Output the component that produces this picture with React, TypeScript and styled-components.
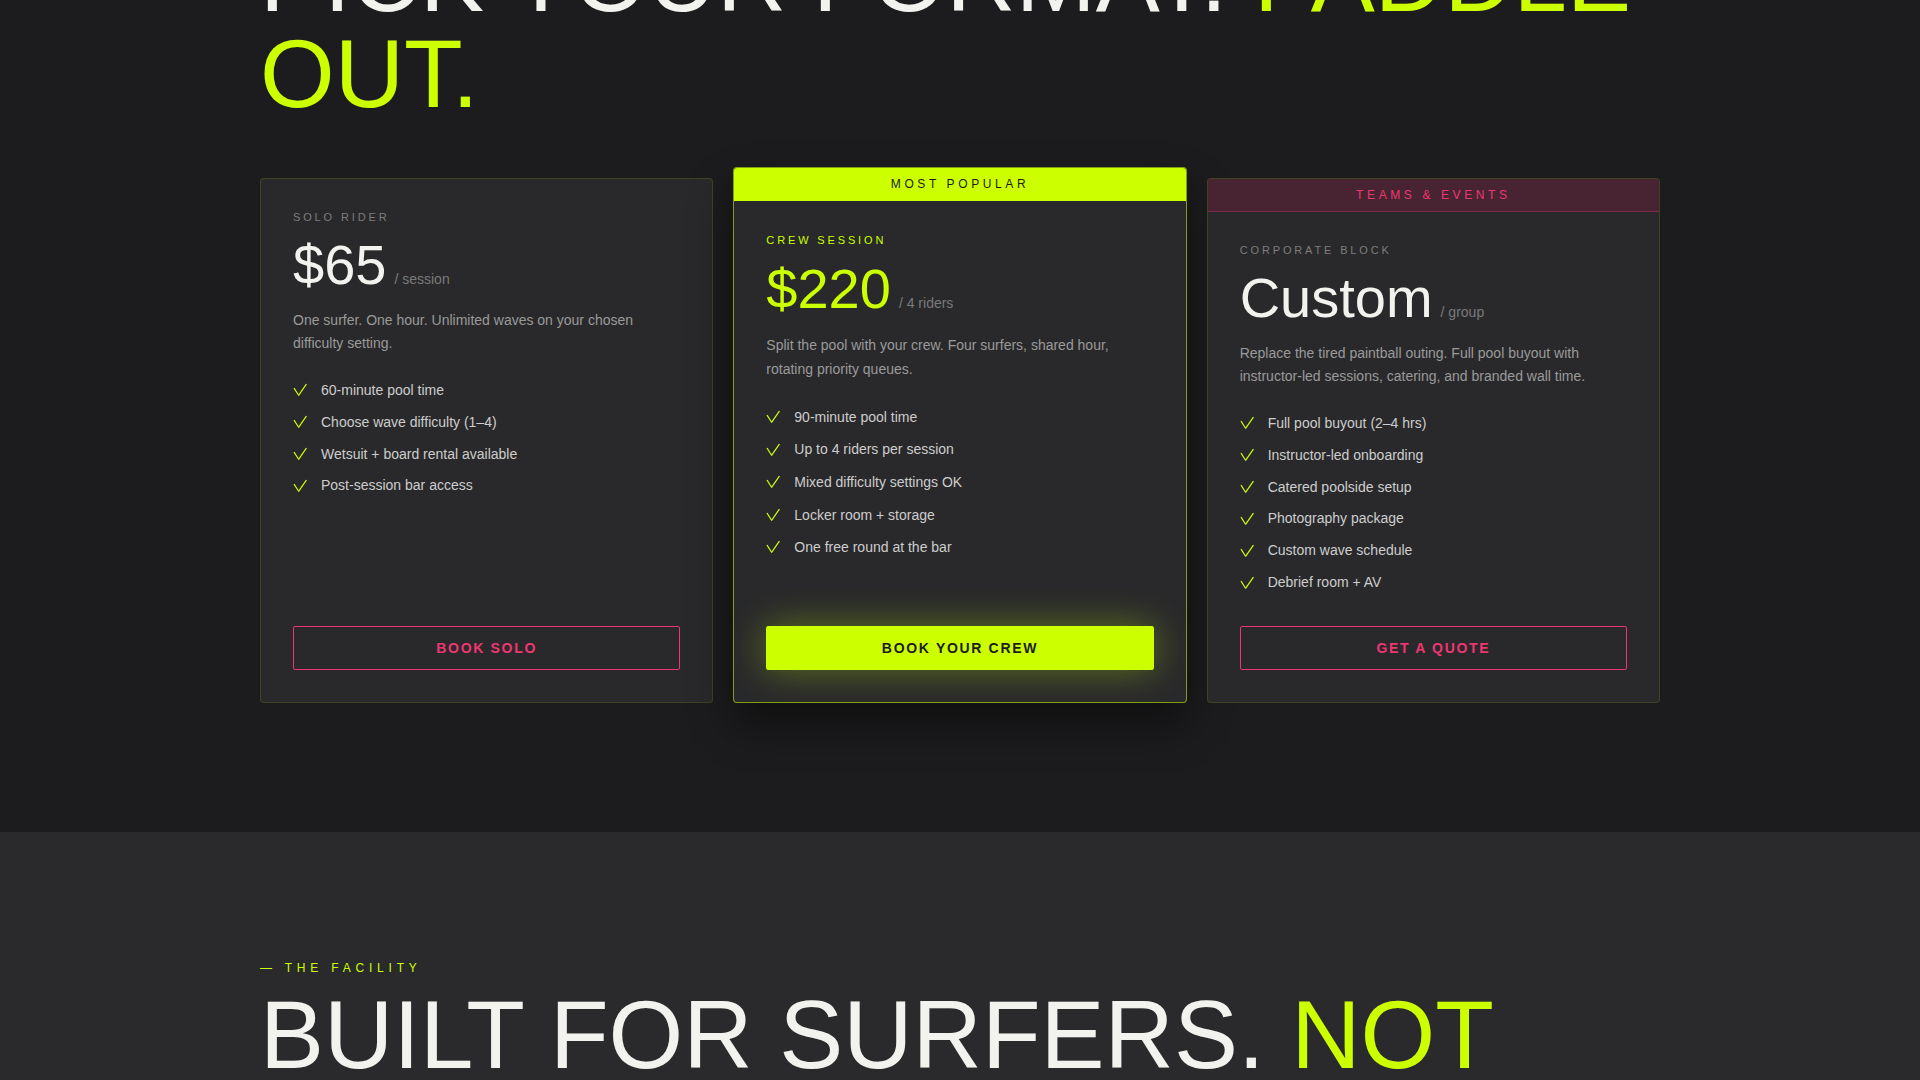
import React from "react";
import styled, { createGlobalStyle, css } from "styled-components";

const LIME = "#ccff00";
const PINK = "#ee3672";

const GlobalStyle = createGlobalStyle`
  *, *::before, *::after { box-sizing: border-box; }
  html, body { margin: 0; padding: 0; background: #1c1c1e; }
  body {
    font-family: "Liberation Sans", Arial, Helvetica, sans-serif;
    color: #f2f2ee;
    -webkit-font-smoothing: antialiased;
  }
`;

const Page = styled.div`
  height: 100vh;
  overflow: hidden;
`;

const PricingSection = styled.section`
  background: #1c1c1e;
  padding: 0 0 129px;
`;

const FacilitySection = styled.section`
  background: #2a2a2d;
  padding: 129px 0 128px;
`;

const Container = styled.div`
  width: 1400px;
  margin: 0 auto;
`;

const Heading = styled.h2`
  margin: 0;
  font-size: 96px;
  line-height: 1;
  font-weight: 400;
  text-transform: uppercase;
  color: #f2f2ee;
`;

const PricingHeading = styled(Heading)`
  margin: -70px 0 56px;
`;

const Accent = styled.span`
  color: ${LIME};
`;

const Eyebrow = styled.div`
  font-size: 12px;
  line-height: 1.2;
  letter-spacing: 0.4em;
  text-transform: uppercase;
  color: ${LIME};
  margin-bottom: 12px;
`;

const PlanGrid = styled.div`
  display: grid;
  grid-template-columns: repeat(3, 1fr);
  gap: 20px;
  align-items: stretch;
`;

const Card = styled.article<{ $featured?: boolean }>`
  display: flex;
  flex-direction: column;
  background: #29292b;
  border: 1px solid rgba(204, 255, 0, 0.13);
  border-radius: 4px;
  overflow: hidden;
  ${(p) =>
    p.$featured &&
    css`
      margin-top: -11px;
      border-color: rgba(204, 255, 0, 0.55);
      box-shadow: 0 22px 44px rgba(0, 0, 0, 0.45);
    `}
`;

const Band = styled.div<{ $tone: "lime" | "pink" }>`
  padding: 9px 0;
  font-size: 12px;
  line-height: 15px;
  letter-spacing: 0.3em;
  text-align: center;
  text-transform: uppercase;
  ${(p) =>
    p.$tone === "lime"
      ? css`
          background: ${LIME};
          color: #1c1c1e;
        `
      : css`
          background: #482433;
          color: ${PINK};
          padding-bottom: 8px;
          border-bottom: 1px solid #7c2b4a;
        `}
`;

const CardBody = styled.div<{ $featured?: boolean }>`
  flex: 1;
  display: flex;
  flex-direction: column;
  padding: ${(p) => (p.$featured ? "33px 32px 32px" : "32px")};
`;

const Tier = styled.div<{ $accent?: boolean }>`
  font-size: 11px;
  line-height: 1.2;
  letter-spacing: 0.26em;
  text-transform: uppercase;
  color: ${(p) => (p.$accent ? LIME : "#7d7d7d")};
  margin-bottom: ${(p) => (p.$accent ? "14px" : "13px")};
`;

const PriceRow = styled.div`
  display: flex;
  align-items: baseline;
  gap: 8px;
`;

const Price = styled.span<{ $accent?: boolean }>`
  font-size: 56px;
  line-height: 1;
  color: ${(p) => (p.$accent ? LIME : "#f2f2ee")};
`;

const PriceUnit = styled.span`
  font-size: 14px;
  color: #7a7a7a;
`;

const Description = styled.p<{ $loose?: boolean }>`
  margin: ${(p) => (p.$loose ? "17px 0 0" : "16px 0 0")};
  font-size: 14px;
  line-height: ${(p) => (p.$loose ? 1.7 : 1.62)};
  color: #9a9a9a;
`;

const Features = styled.ul<{ $loose?: boolean }>`
  list-style: none;
  margin: 24px 0 32px;
  padding: 0;
  display: flex;
  flex-direction: column;
  gap: ${(p) => (p.$loose ? "10.2px" : "9.6px")};
`;

const Feature = styled.li`
  display: flex;
  align-items: center;
  gap: 14px;
  font-size: 14px;
  line-height: 1.6;
  color: #cdcdcd;
`;

const CheckSvg = styled.svg`
  flex: none;
  width: 14px;
  height: 14px;
`;

const Button = styled.button<{ $variant: "solid" | "outline" }>`
  margin-top: auto;
  width: 100%;
  height: 44px;
  border-radius: 2px;
  font-family: inherit;
  font-size: 14px;
  font-weight: 700;
  letter-spacing: 0.12em;
  text-transform: uppercase;
  cursor: pointer;
  ${(p) =>
    p.$variant === "solid"
      ? css`
          background: ${LIME};
          color: #1c1c1e;
          border: 1px solid ${LIME};
          box-shadow: 0 0 36px rgba(204, 255, 0, 0.35);
        `
      : css`
          background: transparent;
          color: ${PINK};
          border: 1px solid ${PINK};
        `}
`;

const Check = () => (
  <CheckSvg viewBox="0 0 14 14" aria-hidden="true">
    <path
      d="M1.2 5.4 L5.6 12.3 L13.2 1.4"
      fill="none"
      stroke={LIME}
      strokeWidth="1.2"
      strokeLinecap="round"
      strokeLinejoin="round"
    />
  </CheckSvg>
);

type Plan = {
  band?: { text: string; tone: "lime" | "pink" };
  tier: string;
  price: string;
  unit: string;
  description: string;
  features: string[];
  cta: string;
  featured?: boolean;
};

const plans: Plan[] = [
  {
    tier: "Solo Rider",
    price: "$65",
    unit: "/ session",
    description:
      "One surfer. One hour. Unlimited waves on your chosen difficulty setting.",
    features: [
      "60-minute pool time",
      "Choose wave difficulty (1–4)",
      "Wetsuit + board rental available",
      "Post-session bar access",
    ],
    cta: "Book Solo",
  },
  {
    band: { text: "Most Popular", tone: "lime" },
    tier: "Crew Session",
    price: "$220",
    unit: "/ 4 riders",
    description:
      "Split the pool with your crew. Four surfers, shared hour, rotating priority queues.",
    features: [
      "90-minute pool time",
      "Up to 4 riders per session",
      "Mixed difficulty settings OK",
      "Locker room + storage",
      "One free round at the bar",
    ],
    cta: "Book Your Crew",
    featured: true,
  },
  {
    band: { text: "Teams & Events", tone: "pink" },
    tier: "Corporate Block",
    price: "Custom",
    unit: "/ group",
    description:
      "Replace the tired paintball outing. Full pool buyout with instructor-led sessions, catering, and branded wall time.",
    features: [
      "Full pool buyout (2–4 hrs)",
      "Instructor-led onboarding",
      "Catered poolside setup",
      "Photography package",
      "Custom wave schedule",
      "Debrief room + AV",
    ],
    cta: "Get a Quote",
  },
];

const PlanCard = ({ plan }: { plan: Plan }) => (
  <Card $featured={plan.featured}>
    {plan.band && <Band $tone={plan.band.tone}>{plan.band.text}</Band>}
    <CardBody $featured={plan.featured}>
      <Tier $accent={plan.featured}>{plan.tier}</Tier>
      <PriceRow>
        <Price $accent={plan.featured}>{plan.price}</Price>
        <PriceUnit>{plan.unit}</PriceUnit>
      </PriceRow>
      <Description $loose={plan.featured}>{plan.description}</Description>
      <Features $loose={plan.featured}>
        {plan.features.map((f) => (
          <Feature key={f}>
            <Check />
            {f}
          </Feature>
        ))}
      </Features>
      <Button $variant={plan.featured ? "solid" : "outline"}>{plan.cta}</Button>
    </CardBody>
  </Card>
);

export default function App() {
  return (
    <Page>
      <GlobalStyle />
      <PricingSection>
        <Container>
          <PricingHeading>
            Pick your format. <Accent>Paddle out.</Accent>
          </PricingHeading>
          <PlanGrid>
            {plans.map((p) => (
              <PlanCard key={p.tier} plan={p} />
            ))}
          </PlanGrid>
        </Container>
      </PricingSection>
      <FacilitySection>
        <Container>
          <Eyebrow>— The Facility</Eyebrow>
          <Heading>
            Built for surfers. <Accent>Not spectators.</Accent>
          </Heading>
        </Container>
      </FacilitySection>
    </Page>
  );
}
